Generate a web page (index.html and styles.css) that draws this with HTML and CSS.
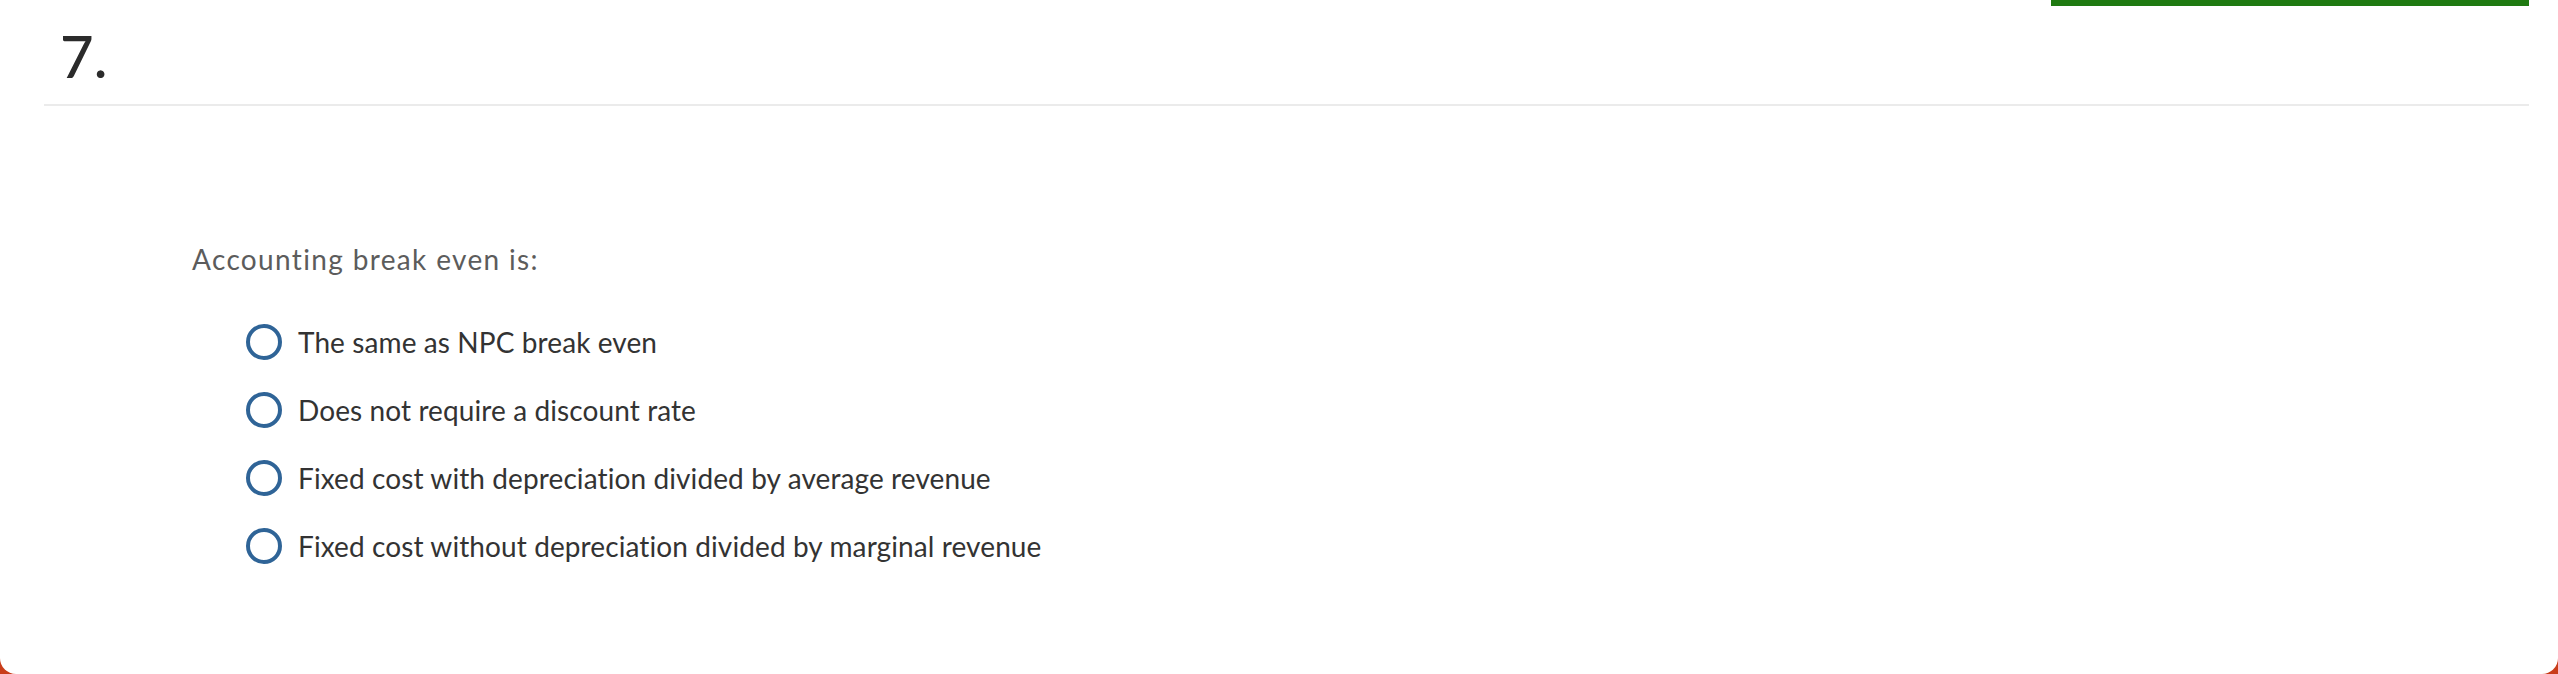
FILE: index.html
```html
<!DOCTYPE html>
<html lang="en">
<head>
<meta charset="utf-8">
<title>Question 7</title>
<link rel="stylesheet" href="styles.css">
</head>
<body>
<div class="card">
  <div class="header">
    <div class="qnum">7.</div>
    <div class="progress"></div>
  </div>
  <div class="prompt">Accounting break even is:</div>
  <ul class="options">
    <li class="option"><span class="radio"></span><span class="label">The same as NPC break even</span></li>
    <li class="option"><span class="radio"></span><span class="label">Does not require a discount rate</span></li>
    <li class="option"><span class="radio"></span><span class="label">Fixed cost with depreciation divided by average revenue</span></li>
    <li class="option"><span class="radio"></span><span class="label">Fixed cost without depreciation divided by marginal revenue</span></li>
  </ul>
</div>
</body>
</html>
```

FILE: styles.css
```css
html, body {
  margin: 0;
  padding: 0;
}
body {
  background: #c93d1a;
  font-family: Lato, "Open Sans", "Liberation Sans", sans-serif;
  font-variant-ligatures: none;
}
.card {
  background: #ffffff;
  height: 674px;
  box-sizing: border-box;
  border-radius: 0 0 16px 16px;
  padding: 0 29px 0 44px;
  overflow: hidden;
}
.header {
  position: relative;
  height: 96px;
  padding-top: 8px;
  border-bottom: 2px solid #ebebeb;
  display: flex;
  align-items: center;
  padding-left: 16px;
}
.qnum {
  font-size: 58px;
  line-height: 1;
  color: #2b2b2b;
  font-weight: 500;
}
.progress {
  position: absolute;
  top: 0;
  right: 0;
  width: 478px;
  height: 6px;
  background: #1f7a11;
}
.prompt {
  margin-top: 137px;
  padding-left: 148px;
  font-size: 28px;
  letter-spacing: 1.35px;
  line-height: 32px;
  color: #5c5c5c;
}
.options {
  list-style: none;
  margin: 33px 0 0;
  padding: 0 0 0 202px;
}
.option {
  display: flex;
  align-items: center;
  height: 68px;
  gap: 16px;
}
.radio {
  width: 36px;
  height: 36px;
  box-sizing: border-box;
  border: 4px solid #2f6497;
  border-radius: 50%;
  flex: none;
}
.label {
  font-size: 28px;
  letter-spacing: 0.1px;
  line-height: 32px;
  color: #333333;
}
```
